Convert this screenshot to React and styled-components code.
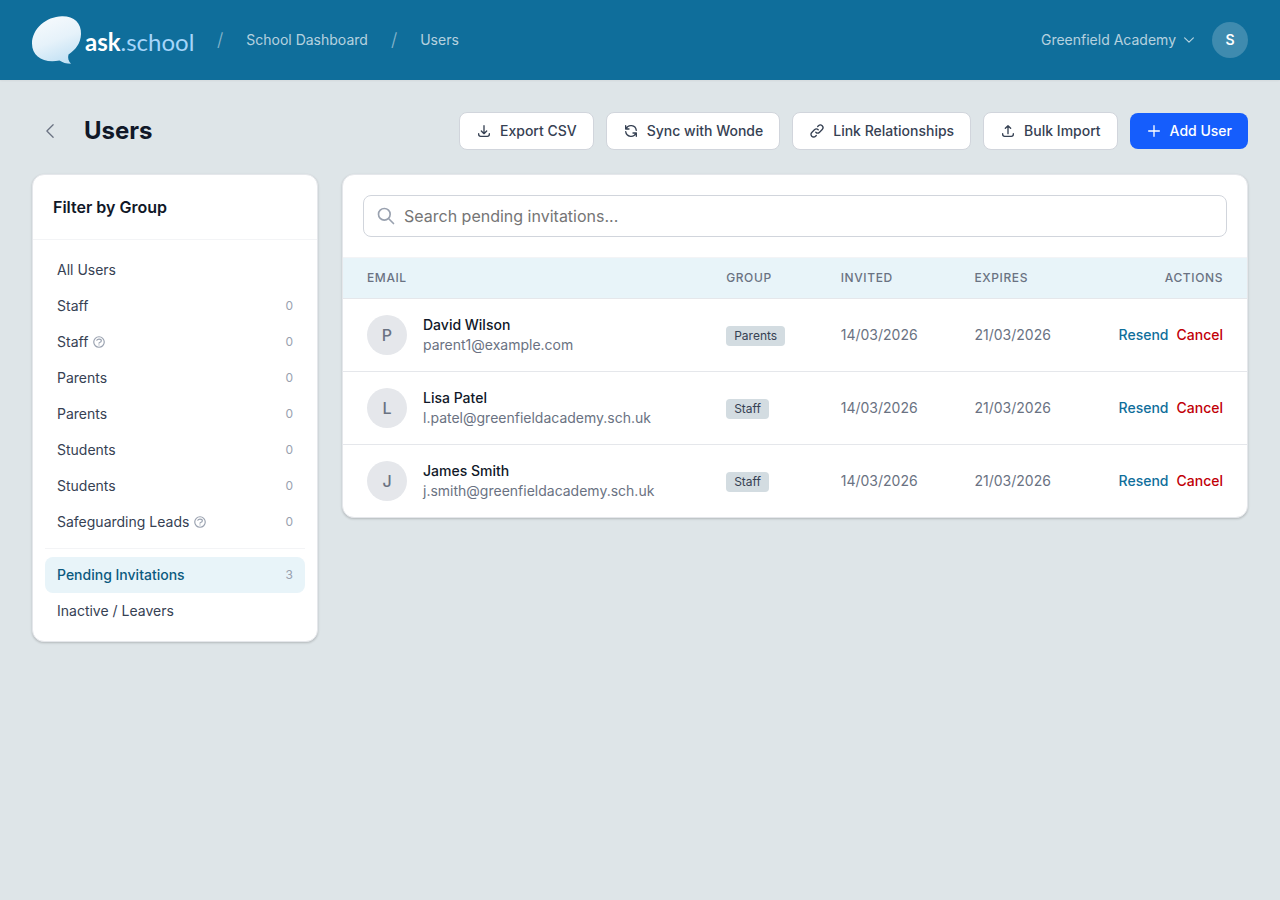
import React from "react";
import styled, { createGlobalStyle } from "styled-components";

const GlobalStyle = createGlobalStyle`
  *, *::before, *::after {
    box-sizing: border-box;
  }
  body {
    margin: 0;
    background: #dee5e8;
    color: #101828;
    font-family: Inter, "Liberation Sans", sans-serif;
    font-size: 14px;
    line-height: 20px;
  }
  button, input {
    font: inherit;
  }
  button {
    cursor: pointer;
  }
`;

const TopBar = styled.header`
  display: flex;
  align-items: center;
  justify-content: space-between;
  height: 80px;
  padding: 0 32px;
  background: #0f6e9b;
  box-shadow: 0 1px 2px rgba(0, 0, 0, 0.05);
`;

const Breadcrumbs = styled.nav`
  display: flex;
  align-items: center;
  gap: 23px;
`;

const LogoLink = styled.a`
  display: flex;
`;

const Crumb = styled.a`
  color: rgba(255, 255, 255, 0.7);
  text-decoration: none;
`;

const Slash = styled.span`
  color: rgba(255, 255, 255, 0.5);
  font-size: 18px;
  font-weight: 300;
  line-height: 24px;
`;

const Account = styled.div`
  display: flex;
  align-items: center;
  gap: 16px;
`;

const SchoolButton = styled.button`
  display: flex;
  align-items: center;
  gap: 6px;
  padding: 0;
  border: 0;
  background: none;
  color: rgba(255, 255, 255, 0.7);
`;

const UserButton = styled.button`
  width: 36px;
  height: 36px;
  padding: 0;
  border: 0;
  border-radius: 50%;
  background: rgba(255, 255, 255, 0.2);
  color: #ffffff;
  font-weight: 600;
`;

const Main = styled.main`
  padding: 32px;
`;

const PageHeader = styled.div`
  display: flex;
  align-items: center;
  justify-content: space-between;
  margin-bottom: 24px;
`;

const TitleGroup = styled.div`
  display: flex;
  align-items: center;
  gap: 16px;
`;

const BackButton = styled.button`
  display: flex;
  padding: 8px;
  border: 0;
  background: none;
  color: #6a7282;
`;

const Title = styled.h1`
  margin: 0;
  font-size: 24px;
  font-weight: 700;
  line-height: 32px;
`;

const Actions = styled.div`
  display: flex;
  align-items: center;
  gap: 12px;
`;

const ActionButton = styled.button`
  display: flex;
  align-items: center;
  gap: 8px;
  padding: 8px 16px;
  border: ${({ $primary }) => ($primary ? "0" : "1px solid #d1d5dc")};
  border-radius: 8px;
  background: ${({ $primary }) => ($primary ? "#155dfc" : "#ffffff")};
  color: ${({ $primary }) => ($primary ? "#ffffff" : "#364153")};
  font-weight: 500;
`;

const Columns = styled.div`
  display: grid;
  grid-template-columns: 286px minmax(0, 1fr);
  align-items: start;
  gap: 24px;
`;

const Card = styled.section`
  overflow: hidden;
  border: 1px solid #e5e7eb;
  border-radius: 12px;
  background: #ffffff;
  box-shadow: 0 1px 3px rgba(0, 0, 0, 0.1), 0 1px 2px rgba(0, 0, 0, 0.1);
`;

const FilterTitle = styled.h2`
  margin: 0;
  padding: 20px;
  border-bottom: 1px solid #f3f4f6;
  font-size: 16px;
  font-weight: 600;
  line-height: 24px;
`;

const FilterList = styled.div`
  display: flex;
  flex-direction: column;
  padding: 12px;
`;

const FilterItem = styled.button`
  display: flex;
  align-items: center;
  justify-content: space-between;
  padding: 8px 12px;
  border: 0;
  border-radius: 8px;
  background: ${({ $active }) => ($active ? "#e8f4f9" : "none")};
  color: ${({ $active }) => ($active ? "#0c5a7f" : "#364153")};
  font-weight: ${({ $active }) => ($active ? 500 : 400)};
  text-align: left;
`;

const FilterLabel = styled.span`
  display: flex;
  align-items: center;
  gap: 4px;

  svg {
    color: #99a1af;
  }
`;

const Count = styled.span`
  color: #99a1af;
  font-size: 12px;
  font-weight: 400;
  line-height: 16px;
`;

const Divider = styled.hr`
  width: 100%;
  margin: 8px 0;
  border: 0;
  border-top: 1px solid #f3f4f6;
`;

const SearchArea = styled.div`
  padding: 20px;
`;

const SearchField = styled.label`
  display: flex;
  align-items: center;
  gap: 8px;
  padding: 8px 12px;
  border: 1px solid #d1d5dc;
  border-radius: 8px;
  color: #99a1af;
`;

const SearchInput = styled.input`
  flex: 1;
  height: 24px;
  padding: 0;
  border: 0;
  outline: 0;
  background: none;
  color: #101828;
  font-size: 16px;

  &::placeholder {
    color: #757575;
  }
`;

const Table = styled.table`
  width: 100%;
  border-collapse: collapse;
`;

const HeadCell = styled.th`
  padding: 12px 24px;
  border-top: 1px solid #f3f4f6;
  border-bottom: 1px solid #e5e7eb;
  background: #e8f4f9;
  color: #6a7282;
  font-size: 12px;
  font-weight: 500;
  letter-spacing: 0.6px;
  line-height: 16px;
  text-align: ${({ $right }) => ($right ? "right" : "left")};
  text-transform: uppercase;
`;

const Row = styled.tr`
  & + & {
    border-top: 1px solid #e5e7eb;
  }
`;

const Cell = styled.td`
  padding: 16px 24px;
  color: #6a7282;
  white-space: nowrap;
`;

const Person = styled.div`
  display: flex;
  align-items: center;
  gap: 16px;
`;

const Avatar = styled.span`
  display: flex;
  align-items: center;
  justify-content: center;
  width: 40px;
  height: 40px;
  border-radius: 50%;
  background: #e5e7eb;
  color: #6a7282;
  font-size: 16px;
  font-weight: 500;
`;

const Name = styled.div`
  color: #101828;
  font-weight: 500;
`;

const Badge = styled.span`
  display: inline-block;
  padding: 2px 8px;
  border-radius: 4px;
  background: #d3dce1;
  color: #364153;
  font-size: 12px;
  line-height: 16px;
`;

const RowActions = styled.div`
  display: flex;
  justify-content: flex-end;
  gap: 8px;
`;

const TextButton = styled.button`
  padding: 0;
  border: 0;
  background: none;
  color: ${({ $danger }) => ($danger ? "#c10007" : "#0f6e9b")};
  font-weight: 500;
`;

const icons = {
  download: "M4 16v1a3 3 0 003 3h10a3 3 0 003-3v-1m-4-4l-4 4m0 0l-4-4m4 4V4",
  sync: "M4 4v5h.582m15.356 2A8.001 8.001 0 004.582 9m0 0H9m11 11v-5h-.581m0 0a8.003 8.003 0 01-15.357-2m15.357 2H15",
  link: "M13.828 10.172a4 4 0 00-5.656 0l-4 4a4 4 0 105.656 5.656l1.102-1.101m-.758-4.899a4 4 0 005.656 0l4-4a4 4 0 00-5.656-5.656l-1.1 1.1",
  upload: "M4 16v1a3 3 0 003 3h10a3 3 0 003-3v-1m-4-8l-4-4m0 0L8 8m4-4v12",
  plus: "M12 4v16m8-8H4",
  left: "M15.75 19.5 8.25 12l7.5-7.5",
  down: "m19.5 8.25-7.5 7.5-7.5-7.5",
  search: "M21 21l-6-6m2-5a7 7 0 11-14 0 7 7 0 0114 0z",
  help: "M8.228 9c.549-1.165 2.03-2 3.772-2 2.21 0 4 1.343 4 3 0 1.4-1.278 2.575-3.006 2.907-.542.104-.994.54-.994 1.093m0 3h.01M21 12a9 9 0 11-18 0 9 9 0 0118 0z",
};

const Icon = ({ name, size = 16, stroke = 2 }) => (
  <svg
    width={size}
    height={size}
    viewBox="0 0 24 24"
    fill="none"
    stroke="currentColor"
    strokeWidth={stroke}
    strokeLinecap="round"
    strokeLinejoin="round"
    aria-hidden="true"
  >
    <path d={icons[name]} />
  </svg>
);

const Logo = () => (
  <svg width="162" height="48" viewBox="0 0 162 48" role="img" aria-label="ask.school">
    <defs>
      <linearGradient id="bubble" x1="0.3" y1="0" x2="0.7" y2="1">
        <stop offset="0" stopColor="#f6fafd" />
        <stop offset="0.5" stopColor="#e6f2fa" />
        <stop offset="1" stopColor="#c0e0f4" />
      </linearGradient>
    </defs>
    <path
      d="M30 0.2C42 0 49.5 7 49 18C48.7 28 43 34 36.5 38.5C35.5 42 36.5 45 39 47.8C34 47.8 30.5 46.5 27.5 44.5C12 47.5 0 41 0 27.5C0 13 14 0.5 30 0.2Z"
      fill="url(#bubble)"
    />
    <text x="53" y="35" fontFamily="Lato, sans-serif" fontSize="24">
      <tspan fill="#ffffff" fontWeight="700">ask</tspan>
      <tspan fill="#a5d5fa">.school</tspan>
    </text>
  </svg>
);

const groups = [
  { label: "All Users" },
  { label: "Staff", count: 0 },
  { label: "Staff", count: 0, help: true },
  { label: "Parents", count: 0 },
  { label: "Parents", count: 0 },
  { label: "Students", count: 0 },
  { label: "Students", count: 0 },
  { label: "Safeguarding Leads", count: 0, help: true },
];

const statuses = [
  { label: "Pending Invitations", count: 3, active: true },
  { label: "Inactive / Leavers" },
];

const invitations = [
  { initial: "P", name: "David Wilson", email: "parent1@example.com", group: "Parents" },
  { initial: "L", name: "Lisa Patel", email: "l.patel@greenfieldacademy.sch.uk", group: "Staff" },
  { initial: "J", name: "James Smith", email: "j.smith@greenfieldacademy.sch.uk", group: "Staff" },
];

const Filter = ({ label, count, help, active }) => (
  <FilterItem type="button" $active={active}>
    <FilterLabel>
      {label}
      {help && <Icon name="help" size={14} />}
    </FilterLabel>
    {count !== undefined && <Count>{count}</Count>}
  </FilterItem>
);

const App = () => {
  return (
    <>
      <GlobalStyle />
      <TopBar>
        <Breadcrumbs>
          <LogoLink href="#">
            <Logo />
          </LogoLink>
          <Slash>/</Slash>
          <Crumb href="#dashboard">School Dashboard</Crumb>
          <Slash>/</Slash>
          <Crumb href="#users">Users</Crumb>
        </Breadcrumbs>
        <Account>
          <SchoolButton type="button">
            Greenfield Academy
            <Icon name="down" size={14} />
          </SchoolButton>
          <UserButton type="button">S</UserButton>
        </Account>
      </TopBar>
      <Main>
        <PageHeader>
          <TitleGroup>
            <BackButton type="button" aria-label="Back">
              <Icon name="left" size={20} stroke={1.5} />
            </BackButton>
            <Title>Users</Title>
          </TitleGroup>
          <Actions>
            <ActionButton type="button">
              <Icon name="download" />
              Export CSV
            </ActionButton>
            <ActionButton type="button">
              <Icon name="sync" />
              Sync with Wonde
            </ActionButton>
            <ActionButton type="button">
              <Icon name="link" />
              Link Relationships
            </ActionButton>
            <ActionButton type="button">
              <Icon name="upload" />
              Bulk Import
            </ActionButton>
            <ActionButton type="button" $primary>
              <Icon name="plus" />
              Add User
            </ActionButton>
          </Actions>
        </PageHeader>
        <Columns>
          <Card>
            <FilterTitle>Filter by Group</FilterTitle>
            <FilterList>
              {groups.map((group, i) => (
                <Filter key={i} {...group} />
              ))}
              <Divider />
              {statuses.map((status) => (
                <Filter key={status.label} {...status} />
              ))}
            </FilterList>
          </Card>
          <Card>
            <SearchArea>
              <SearchField>
                <Icon name="search" size={20} />
                <SearchInput
                  type="text"
                  aria-label="Search pending invitations"
                  placeholder="Search pending invitations..."
                />
              </SearchField>
            </SearchArea>
            <Table>
              <thead>
                <tr>
                  <HeadCell>Email</HeadCell>
                  <HeadCell>Group</HeadCell>
                  <HeadCell>Invited</HeadCell>
                  <HeadCell>Expires</HeadCell>
                  <HeadCell $right>Actions</HeadCell>
                </tr>
              </thead>
              <tbody>
                {invitations.map((item) => (
                  <Row key={item.email}>
                    <Cell>
                      <Person>
                        <Avatar>{item.initial}</Avatar>
                        <div>
                          <Name>{item.name}</Name>
                          <div>{item.email}</div>
                        </div>
                      </Person>
                    </Cell>
                    <Cell>
                      <Badge>{item.group}</Badge>
                    </Cell>
                    <Cell>14/03/2026</Cell>
                    <Cell>21/03/2026</Cell>
                    <Cell>
                      <RowActions>
                        <TextButton type="button">Resend</TextButton>
                        <TextButton type="button" $danger>
                          Cancel
                        </TextButton>
                      </RowActions>
                    </Cell>
                  </Row>
                ))}
              </tbody>
            </Table>
          </Card>
        </Columns>
      </Main>
    </>
  );
};

export default App;
